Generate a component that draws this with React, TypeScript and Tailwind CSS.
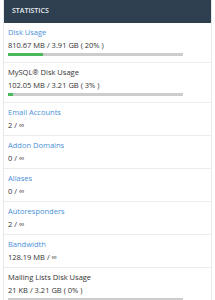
import React from 'react';

interface Stat {
  label: string;
  value: string;
  link?: boolean;
  percent?: number;
}

const stats: Stat[] = [
  { label: 'Disk Usage', value: '810.67 MB / 3.91 GB ( 20% )', link: true, percent: 20 },
  { label: 'MySQL® Disk Usage', value: '102.05 MB / 3.21 GB ( 3% )', percent: 3 },
  { label: 'Email Accounts', value: '2 / ∞', link: true },
  { label: 'Addon Domains', value: '0 / ∞', link: true },
  { label: 'Aliases', value: '0 / ∞', link: true },
  { label: 'Autoresponders', value: '2 / ∞', link: true },
  { label: 'Bandwidth', value: '128.19 MB / ∞', link: true },
  { label: 'Mailing Lists Disk Usage', value: '21 KB / 3.21 GB ( 0% )', percent: 0 },
];

const App: React.FC = () => {
  return (
    <div
      className="w-[215px] h-[300px] overflow-hidden bg-white"
      style={{ fontFamily: '"Open Sans", "Liberation Sans", sans-serif' }}
    >
      <div className="ml-[3px] w-[209px] border-x border-[#e8e8e8]">
        <div className="h-[23px] bg-[#2e3f50] flex items-center px-[8px]">
          <span className="text-[7px] font-semibold text-[#e9eef2] uppercase">Statistics</span>
        </div>
        {stats.map((s) => (
          <div
            key={s.label}
            className={`border-b border-[#ececec] px-[4px] pt-[3px] ${s.percent !== undefined ? 'pb-[6px]' : 'pb-[3px]'}`}
          >
            <div className={`text-[7.5px] leading-[13px] ${s.link ? 'text-[#4a90d9]' : 'text-[#333]'}`}>
              {s.label}
            </div>
            <div className="text-[7.5px] leading-[13px] text-[#333]">{s.value}</div>
            {s.percent !== undefined && (
              <div className="mt-[1px] w-[175px] h-[3px] bg-[#cccccc]">
                <div className="h-full bg-[#4cb85c]" style={{ width: `${s.percent}%` }}></div>
              </div>
            )}
          </div>
        ))}
      </div>
    </div>
  );
};

export default App;
